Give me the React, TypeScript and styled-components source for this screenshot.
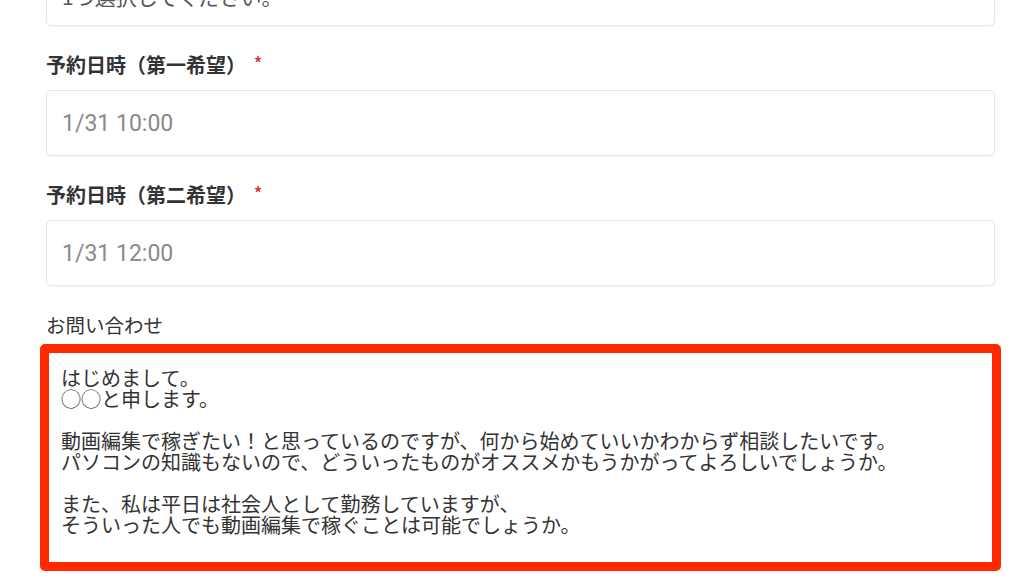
import React from 'react'
import styled, { createGlobalStyle } from 'styled-components'

const GlobalStyle = createGlobalStyle`
  html, body {
    margin: 0;
    padding: 0;
    background: #ffffff;
    overflow: hidden;
  }
  body {
    font-family: "Noto Sans CJK JP", "Noto Sans", sans-serif;
    color: #333;
  }
`

const Page = styled.div`
  width: 1024px;
  height: 583px;
  overflow: hidden;
`

// the page is scrolled, so the form starts above the top edge
const Form = styled.div`
  width: 949px;
  margin-left: 46px;
  margin-top: -40px;
  display: flex;
  flex-direction: column;
`

const Field = styled.div`
  display: flex;
  flex-direction: column;
  margin-bottom: 24px;
`

const Label = styled.div<{ $bold?: boolean }>`
  display: flex;
  align-items: center;
  height: 28px;
  font-size: ${(p) => (p.$bold ? 20 : 19.5)}px;
  font-weight: ${(p) => (p.$bold ? 700 : 400)};
  color: #333;
  margin-bottom: 12px;
`

const Required = styled.span`
  color: #e2343f;
  font-size: 16px;
  font-weight: 700;
  margin-left: 8px;
  margin-top: -4px;
`

const Input = styled.div<{ $shift?: number }>`
  box-sizing: border-box;
  height: 66px;
  border: 1px solid #e6e6e6;
  border-radius: 5px;
  box-shadow: 0 1px 2px rgba(0, 0, 0, 0.04);
  background: #fff;
  display: flex;
  align-items: center;
  padding: ${(p) => p.$shift || 0}px 15px 0;
  font-family: Roboto, "Noto Sans CJK JP", sans-serif;
  font-size: 23px;
  color: #8a8a8a;
`

const Selected = styled.span`
  font-family: "Noto Sans CJK JP", sans-serif;
  color: #555;
  font-size: 21px;
`

const Highlight = styled.div`
  box-sizing: border-box;
  margin: -6px -6px 0;
  height: 227px;
  border: 9px solid #ff2a00;
  border-radius: 5px;
  background: #fff;
  padding: 14px 12px;
  font-size: 20px;
  line-height: 21px;
  color: #333;
  white-space: pre-wrap;
`

const message = `はじめまして。
◯◯と申します。

動画編集で稼ぎたい！と思っているのですが、何から始めていいかわからず相談したいです。
パソコンの知識もないので、どういったものがオススメかもうかがってよろしいでしょうか。

また、私は平日は社会人として勤務していますが、
そういった人でも動画編集で稼ぐことは可能でしょうか。`

const App: React.FC = () => {
  return (
    <>
      <GlobalStyle />
      <Page>
        <Form>
          <Field>
            <Input $shift={6}>
              <Selected>1つ選択してください。</Selected>
            </Input>
          </Field>
          <Field>
            <Label $bold>
              予約日時（第一希望）<Required>*</Required>
            </Label>
            <Input>1/31 10:00</Input>
          </Field>
          <Field>
            <Label $bold>
              予約日時（第二希望）<Required>*</Required>
            </Label>
            <Input>1/31 12:00</Input>
          </Field>
          <Label>お問い合わせ</Label>
          <Highlight>{message}</Highlight>
        </Form>
      </Page>
    </>
  )
}

export default App
